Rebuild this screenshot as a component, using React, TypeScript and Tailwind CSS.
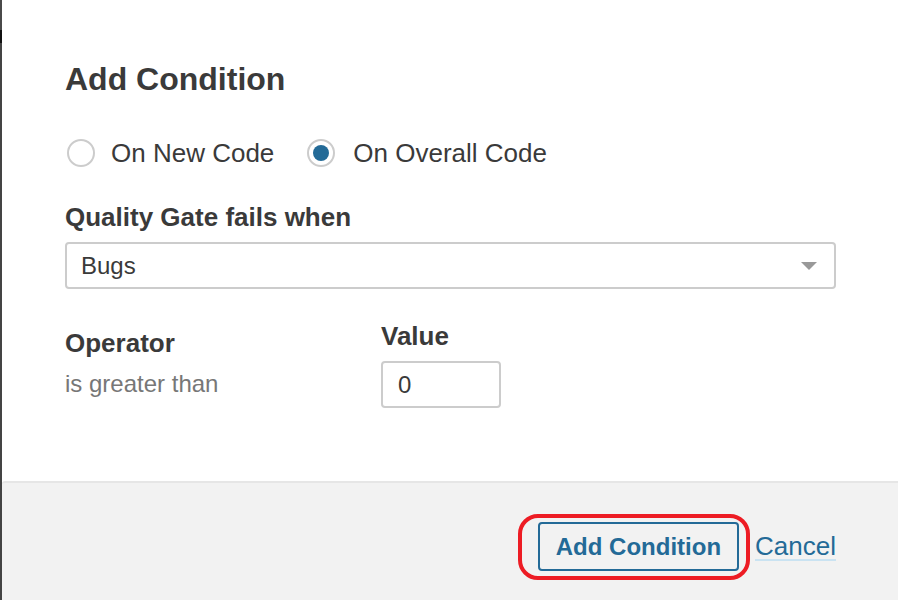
export default function App() {
  return (
    <div
      className="flex h-[600px] w-[898px] overflow-hidden bg-white text-[#3a3a3a]"
      style={{ fontFamily: '"Liberation Sans", Arial, sans-serif' }}
    >
      <div className="flex w-[2px] flex-col">
        <div className="h-[30px] bg-[#4a4a4a]" />
        <div className="h-[13px] bg-[#111]" />
        <div className="flex-1 bg-[#444]" />
      </div>

      <div className="flex flex-1 flex-col">
        <div className="flex-1 pl-[63px] pr-[62px] pt-[59px]">
          <h2 className="text-[32px] font-bold leading-[40px]">Add Condition</h2>

          <div className="mt-[38px] flex h-[32px] items-center text-[26px] leading-[32px]">
            <span className="ml-[2px] h-[28px] w-[28px] rounded-full border-2 border-[#ccc] bg-white" />
            <span className="ml-[16px]">On New Code</span>
            <span className="ml-[33px] flex h-[28px] w-[28px] items-center justify-center rounded-full border-2 border-[#ccc] bg-white">
              <span className="h-[16px] w-[16px] rounded-full bg-[#236a97]" />
            </span>
            <span className="ml-[18px]">On Overall Code</span>
          </div>

          <div className="mt-[32px] text-[26px] font-bold leading-[32px]">Quality Gate fails when</div>
          <div className="mt-[9px] flex h-[47px] items-center justify-between rounded-[4px] border-2 border-[#ccc] bg-white pl-[14px] pr-[17px] text-[24px]">
            <span>Bugs</span>
            <svg width="16" height="8" viewBox="0 0 16 8">
              <path d="M0 0h16L8 8z" fill="#999" />
            </svg>
          </div>

          <div className="mt-[31px] flex">
            <div className="w-[316px] pt-[7px]">
              <div className="text-[26px] font-bold leading-[32px]">Operator</div>
              <div className="mt-[10px] text-[24px] leading-[30px] text-[#777]">is greater than</div>
            </div>
            <div>
              <div className="text-[26px] font-bold leading-[32px]">Value</div>
              <div className="mt-[9px] flex h-[47px] w-[120px] items-center rounded-[4px] border-2 border-[#ccc] bg-white pl-[15px] text-[24px]">
                0
              </div>
            </div>
          </div>
        </div>

        <div className="flex h-[119px] items-start justify-end rounded-tl-[3px] border-t-2 border-[#e6e6e6] bg-[#f2f2f2] pr-[62px] pt-[39px]">
          <div className="relative">
            <button className="h-[49px] rounded-[4px] border-2 border-[#236a97] bg-transparent px-[16px] text-[24px] font-bold leading-[30px] text-[#236a97]">
              Add Condition
            </button>
            <div className="pointer-events-none absolute left-[-20px] top-[-8px] h-[66px] w-[232px] rounded-[20px] border-4 border-[#ed1c24]" />
          </div>
          <div className="ml-[16px] flex h-[49px] items-center">
            <span className="inline-block border-b-2 border-[#cae3f2] text-[26px] leading-none text-[#236a97]">Cancel</span>
          </div>
        </div>
      </div>
    </div>
  );
}
